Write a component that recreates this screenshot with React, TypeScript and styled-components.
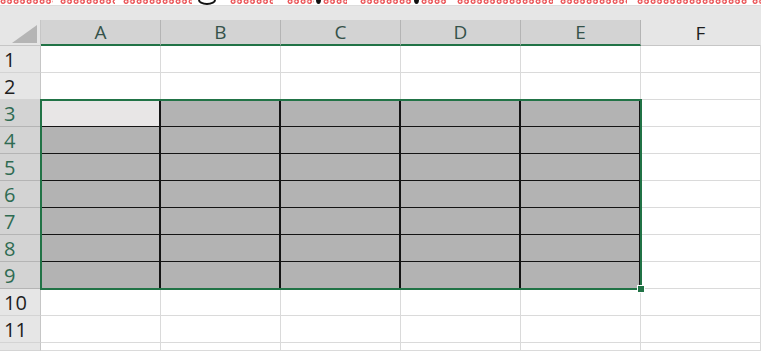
import styled, { createGlobalStyle } from "styled-components";

const GlobalStyle = createGlobalStyle`
  html, body {
    margin: 0;
    padding: 0;
    background: #ffffff;
  }
  body {
    font-family: "Open Sans", "Liberation Sans", sans-serif;
    width: 761px;
    height: 356px;
    overflow: hidden;
  }
`;

const GREEN = "#217346";
const COLUMNS = ["A", "B", "C", "D", "E", "F"];
const ROWS = [1, 2, 3, 4, 5, 6, 7, 8, 9, 10, 11];
const SEL_COLS = [0, 1, 2, 3, 4];
const SEL_FROM = 3;
const SEL_TO = 9;

// spell-check squiggle left over from the text above the sheet
const SQUIGGLE: { from: number; to: number; ink?: "ring" | "dot" }[] = [
  { from: 0, to: 53 },
  { from: 60, to: 115 },
  { from: 123, to: 192 },
  { from: 198, to: 216, ink: "ring" },
  { from: 230, to: 273 },
  { from: 287, to: 314 },
  { from: 316, to: 321, ink: "dot" },
  { from: 323, to: 347 },
  { from: 360, to: 412 },
  { from: 414, to: 419, ink: "dot" },
  { from: 421, to: 447 },
  { from: 457, to: 553 },
  { from: 560, to: 627 },
  { from: 637, to: 747 },
  { from: 752, to: 761 },
];

const Squiggle = styled.div`
  display: flex;
  height: 5px;
  overflow: hidden;
`;

const Wave = styled.span<{ $width: number; $gap: number }>`
  flex: none;
  width: ${(p) => p.$width}px;
  margin-left: ${(p) => p.$gap}px;
  height: 5px;
  background-image: radial-gradient(
    circle at 3px 1.5px,
    transparent 0.9px,
    #e3343a 1.4px,
    #f07070 2.3px,
    transparent 2.8px
  );
  background-size: 6.5px 5px;
`;

const Ink = styled.span<{ $width: number; $gap: number; $ring: boolean }>`
  flex: none;
  width: ${(p) => p.$width}px;
  margin-left: ${(p) => p.$gap}px;
  height: ${(p) => (p.$ring ? 10 : 9)}px;
  margin-top: -5px;
  box-sizing: border-box;
  border-radius: 50%;
  ${(p) =>
    p.$ring
      ? `border: 2px solid #111; background: transparent;`
      : `background: #111;`}
`;

const Band = styled.div`
  height: 15px;
  background: #e6e6e6;
  border-top: 1px solid #dcdcdc;
  box-sizing: border-box;
`;

const Grid = styled.div`
  position: relative;
  display: grid;
  grid-template-columns: 41px repeat(6, 120px);
  grid-template-rows: 26px repeat(11, 27px) 8px;
  width: 761px;
  background: #ffffff;
`;

const Corner = styled.div`
  display: flex;
  align-items: flex-end;
  justify-content: flex-end;
  padding: 0 3px 2px 0;
  background: #e6e6e6;
  border-right: 1px solid #c6c6c6;
  border-bottom: 1px solid #c6c6c6;
  box-sizing: border-box;
`;

const Triangle = styled.span`
  width: 0;
  height: 0;
  border-left: 25px solid transparent;
  border-bottom: 18px solid #b5b5b5;
`;

const ColHead = styled.div<{ $selected: boolean }>`
  display: flex;
  align-items: center;
  justify-content: center;
  box-sizing: border-box;
  font-size: 19px;
  background: ${(p) => (p.$selected ? "#d3d3d3" : "#e6e6e6")};
  color: ${(p) => (p.$selected ? "#35524a" : "#1e1e1e")};
  border-right: 1px solid ${(p) => (p.$selected ? "#b4b4b4" : "#e6e6e6")};
  border-bottom: ${(p) =>
    p.$selected ? `2px solid ${GREEN}` : "1px solid #c6c6c6"};
`;

const RowHead = styled.div<{ $selected: boolean }>`
  display: flex;
  align-items: center;
  padding: 2px 0 0 4px;
  box-sizing: border-box;
  font-size: 20px;
  line-height: 1;
  overflow: hidden;
  background: ${(p) => (p.$selected ? "#d3d3d3" : "#e6e6e6")};
  color: ${(p) => (p.$selected ? "#2f6b52" : "#1e1e1e")};
  border-right: 1px solid ${(p) => (p.$selected ? GREEN : "#c6c6c6")};
  border-bottom: 1px solid ${(p) => (p.$selected ? "#b4b4b4" : "#d4d4d4")};
`;

const Cell = styled.div<{ $selected: boolean; $active: boolean }>`
  box-sizing: border-box;
  background: ${(p) =>
    p.$active ? "#e8e6e6" : p.$selected ? "#b3b3b3" : "#ffffff"};
  border-right: ${(p) =>
    p.$selected ? "2px solid #141414" : "1px solid #dadada"};
  border-bottom: 1px solid ${(p) => (p.$selected ? "#141414" : "#dadada")};
`;

const Selection = styled.div`
  position: absolute;
  grid-column: 2 / 7;
  grid-row: 4 / 11;
  top: -1px;
  left: -1px;
  right: -1px;
  bottom: -1px;
  border: 2px solid ${GREEN};
  pointer-events: none;
`;

const FillHandle = styled.span`
  position: absolute;
  right: -5px;
  bottom: -5px;
  width: 6px;
  height: 6px;
  background: ${GREEN};
  border: 1px solid #ffffff;
`;

const App = () => {
  let cursor = 0;
  // the 12th row is only a sliver at the bottom edge, so it has no label
  const rows = [...ROWS, null];
  return (
    <>
      <GlobalStyle />
      <Squiggle>
        {SQUIGGLE.map((s, i) => {
          const gap = s.from - cursor;
          cursor = s.to;
          return s.ink ? (
            <Ink
              key={i}
              $width={s.to - s.from}
              $gap={gap}
              $ring={s.ink === "ring"}
            />
          ) : (
            <Wave key={i} $width={s.to - s.from} $gap={gap} />
          );
        })}
      </Squiggle>
      <Band />
      <Grid>
        <Corner>
          <Triangle />
        </Corner>
        {COLUMNS.map((c, i) => (
          <ColHead key={c} $selected={SEL_COLS.includes(i)}>
            {c}
          </ColHead>
        ))}
        {rows.map((r, ri) => {
          const rowSelected = r !== null && r >= SEL_FROM && r <= SEL_TO;
          return [
            <RowHead key={`h${ri}`} $selected={rowSelected}>
              {r}
            </RowHead>,
            ...COLUMNS.map((c, i) => {
              const selected = rowSelected && SEL_COLS.includes(i);
              return (
                <Cell
                  key={`${c}${ri}`}
                  $selected={selected}
                  $active={selected && i === 0 && r === SEL_FROM}
                />
              );
            }),
          ];
        })}
        <Selection>
          <FillHandle />
        </Selection>
      </Grid>
    </>
  );
};

export default App;
